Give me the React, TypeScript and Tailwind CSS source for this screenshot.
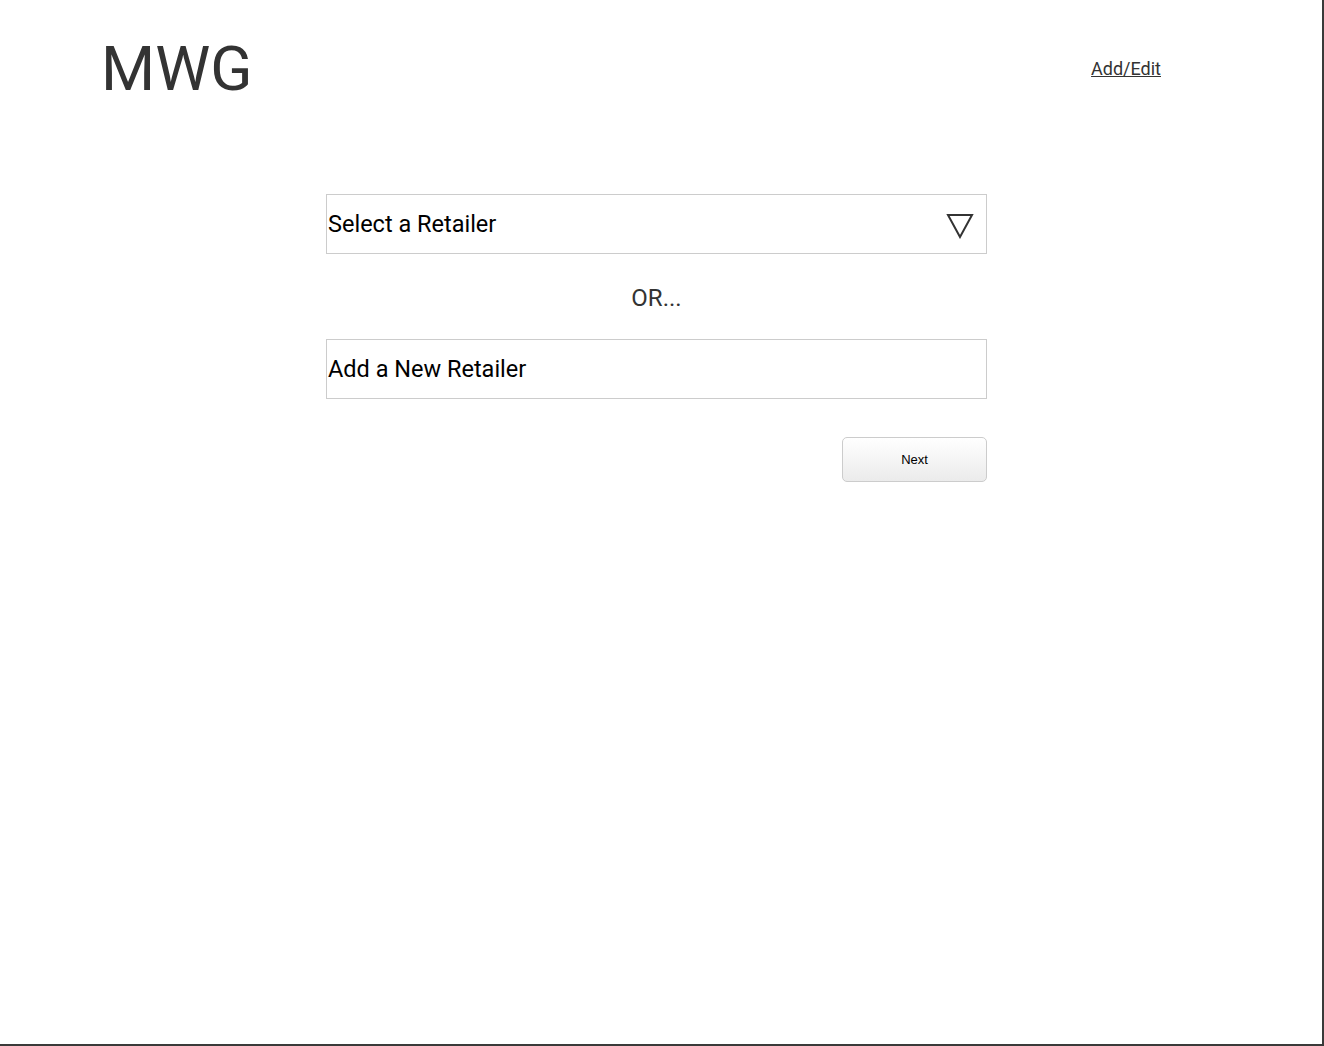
import React from "react";

export default function App() {
  return (
    <div
      className="relative w-[1324px] h-[1046px] bg-white border-r-2 border-b-2 border-[#3a3a3a] overflow-hidden"
      style={{ fontFamily: "Roboto, 'Liberation Sans', sans-serif" }}
    >
      {/* Header */}
      <div className="flex items-start justify-between pl-[101px] pr-[161px] pt-[38px]">
        <h1 className="text-[62px] leading-[62px] text-[#333333] font-normal">MWG</h1>
        <a href="#" className="mt-[20px] text-[18px] leading-[22px] text-[#333333] underline">
          Add/Edit
        </a>
      </div>

      {/* Form */}
      <div className="ml-[326px] mt-[94px] w-[661px] flex flex-col">
        <div className="h-[60px] border border-[#cccccc] flex items-center justify-between pl-[1px] pr-[12px]">
          <span className="text-[23.5px] text-black pt-[2px]">Select a Retailer</span>
          <svg width="28" height="26" viewBox="0 0 28 26" fill="none" className="mt-[4px]">
            <path d="M2 2 L26 2 L14 24 Z" stroke="#333333" strokeWidth="2" strokeLinejoin="miter" />
          </svg>
        </div>

        <div className="h-[85px] flex items-center justify-center text-[24px] text-[#333333] pt-[3px]">
          OR...
        </div>

        <div className="h-[60px] border border-[#cccccc] flex items-center pl-[1px]">
          <span className="text-[23.5px] text-black pt-[2px]">Add a New Retailer</span>
        </div>

        <div className="flex justify-end mt-[38px]">
          <button
            className="w-[145px] h-[45px] rounded-[5px] border border-[#cccccc] bg-gradient-to-b from-white to-[#ebebeb] text-[13px] text-black"
            style={{ fontFamily: "'Liberation Sans', Arial, sans-serif" }}
          >
            Next
          </button>
        </div>
      </div>
    </div>
  );
}
